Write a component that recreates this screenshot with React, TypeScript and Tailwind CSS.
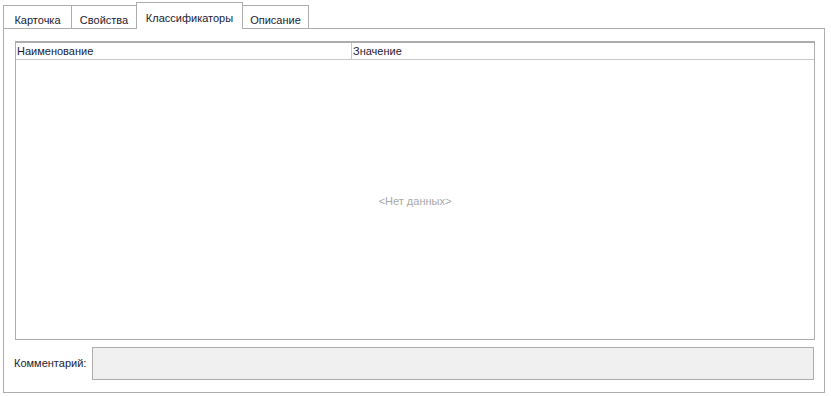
import React from 'react';

const tabs = [
  { label: 'Карточка', width: 'w-[69px]' },
  { label: 'Свойства', width: 'w-[66px]' },
  { label: 'Классификаторы', width: 'w-[107px]', active: true },
  { label: 'Описание', width: 'w-[67px]' },
];

const App: React.FC = () => {
  return (
    <div className="w-[831px] h-[396px] bg-white text-[11px] text-[#1b1b33] font-['Liberation_Sans','Arial',sans-serif] overflow-hidden">
      <div className="pl-[3px] pt-[2px] w-[825px]">
        {/* tabs */}
        <div className="relative z-10 flex items-end h-[27px]">
          {tabs.map((tab, i) =>
            tab.active ? (
              <div
                key={tab.label}
                className={`${tab.width} h-[27px] -ml-px flex items-start justify-center pt-[7px] bg-white border-t border-l border-r border-[#adadad] whitespace-nowrap`}
              >
                {tab.label}
              </div>
            ) : (
              <div
                key={tab.label}
                className={`${tab.width} h-[23px] mb-px ${i > 0 ? '-ml-px' : ''} flex items-start justify-center pt-[6px] bg-white border-t border-l border-r border-[#adadad] whitespace-nowrap`}
              >
                {tab.label}
              </div>
            )
          )}
        </div>

        {/* panel */}
        <div className="-mt-px h-[365px] border border-[#adadad] pl-[11px] pr-[9px] pt-[12px] pb-[12px] flex flex-col">
          <div className="h-[299px] border border-[#adadad] flex flex-col">
            <div className="h-[18px] flex border-t border-[#adadad] border-b border-b-[#c8c8c8]">
              <div className="w-[336px] border-r border-[#c8c8c8] pl-[1px] leading-[17px]">Наименование</div>
              <div className="flex-1 pl-[1px] leading-[17px]">Значение</div>
            </div>
            <div className="flex-1 pt-[4px] flex items-center justify-center text-[#a8a8a8]">&lt;Нет данных&gt;</div>
          </div>
          <div className="mt-[7px] flex items-center">
            <div className="w-[77px] -ml-[1px] whitespace-nowrap">Комментарий:</div>
            <div className="h-[33px] flex-1 ml-px mr-px bg-[#f0f0f0] border border-[#adadad]" />
          </div>
        </div>
      </div>
    </div>
  );
};

export default App;
